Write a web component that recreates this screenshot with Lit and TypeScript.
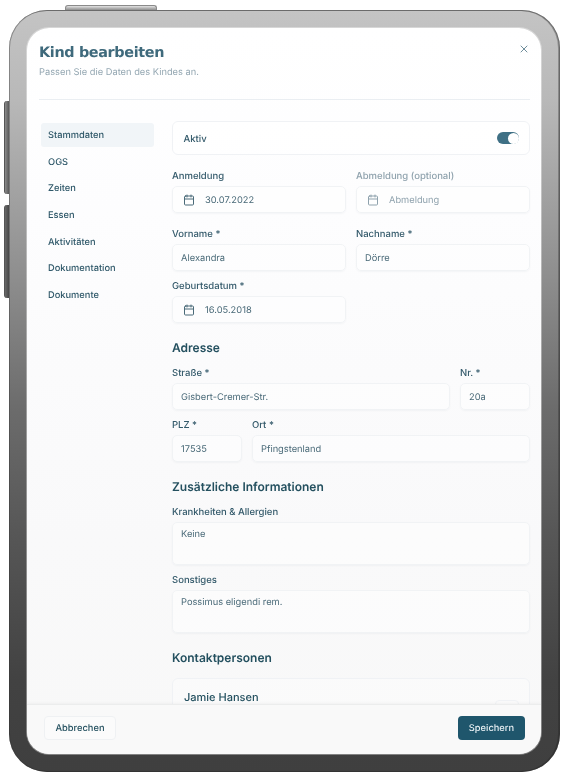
import { LitElement, html, css, svg } from "lit";
import { customElement } from "lit/decorators.js";

const calendar = svg`<svg class="cal" viewBox="0 0 24 24" fill="none" stroke="currentColor" stroke-width="2" stroke-linecap="round" stroke-linejoin="round"><path d="M8 2v4"/><path d="M16 2v4"/><rect x="3" y="4" width="18" height="18" rx="2"/><path d="M3 10h18"/></svg>`;

@customElement("app-root")
export class AppRoot extends LitElement {
  static styles = css`
    :host { display: block; width: 568px; height: 779px; position: relative; overflow: hidden; background: #fff; font-family: Inter, "Noto Sans", sans-serif; color: #24505f; text-rendering: geometricPrecision; }
    * { box-sizing: border-box; }
    .stage { padding: 10px 8px 7px 9px; height: 779px; position: relative; filter: blur(0.3px); }
    .btn-top { position: absolute; left: 65px; top: 5px; width: 92px; height: 5px; border-radius: 3px 3px 0 0; background: linear-gradient(#e2e2e2, #8d8d8d); border: 1px solid #8a8a8a; border-bottom: 0; }
    .btn-side { position: absolute; left: 4px; width: 5px; border-radius: 3px 0 0 3px; background: linear-gradient(90deg, #8c8c8c, #585858); border-left: 1px solid #555; }
    .b1 { top: 101px; height: 93px; }
    .b2 { top: 205px; height: 93px; background: linear-gradient(90deg, #6a6a6a, #464646); }
    .device { height: 762px; border-radius: 38px; padding: 18px 19px 18px 18px; background: linear-gradient(180deg, #c4c4c4 0%, #b8b8b8 12%, #8e8e8e 35%, #6c6c6c 52%, #555 70%, #424242 88%, #3f3f3f 100%); box-shadow: inset 0 0 0 1px rgba(50,50,50,.4), inset -1px 0 0 1px rgba(30,30,30,.3); display: flex; }
    .screen { flex: 1; border-radius: 22px; overflow: hidden; display: flex; flex-direction: column; background: linear-gradient(180deg, #ffffff 0%, #fdfdfe 25%, #f9f9fa 70%, #f8f8f8 100%); position: relative; box-shadow: 0 0 0 1px rgba(255,255,255,.35); }
    header { padding: 16px 11px 0 12px; height: 72px; position: relative; flex: none; }
    header::after { content: ""; position: absolute; left: 12px; right: 11px; bottom: 0; height: 1px; background: #eaeef2; }
    h1 { margin: 0; font: 700 14.4px/18px "DejaVu Sans", sans-serif; color: #3f6a7c; letter-spacing: -.35px; }
    .sub { margin: 5px 0 0; font-size: 9.3px; line-height: 12px; color: #94a7b2; }
    .close { position: absolute; right: 11px; top: 15px; width: 12px; height: 12px; color: #6f8d9b; }
    .body { flex: 1; min-height: 0; display: flex; gap: 18px; padding: 21px 11px 0 14px; overflow: hidden; }
    nav { width: 113px; flex: none; padding-top: 2px; display: flex; flex-direction: column; gap: 2.7px; }
    nav a { height: 24px; line-height: 25px; padding-left: 7px; font-size: 9.3px; font-weight: 500; color: #2f5869; border-radius: 3px; }
    nav a.on { background: #f1f5f8; }
    .main { flex: 1; min-width: 0; display: flex; flex-direction: column; }
    .active { height: 34px; flex: none; border: 1px solid #f0f2f5; border-radius: 6px; display: flex; align-items: center; justify-content: space-between; padding: 0 10px 0 10.5px; font-size: 9.5px; font-weight: 500; color: #33596a; background: rgba(255,255,255,.6); }
    .active .name { padding-top: 2px; }
    .toggle { width: 22px; height: 12px; border-radius: 6px; background: #3f7085; position: relative; }
    .toggle::after { content: ""; position: absolute; right: .5px; top: .5px; width: 11px; height: 11px; border-radius: 50%; background: #fff; }
    .row { display: grid; grid-template-columns: 174px 174px; column-gap: 10px; flex: none; }
    .f { display: flex; flex-direction: column; min-width: 0; }
    label { font-size: 9.5px; font-weight: 500; line-height: 14px; color: #33596a; margin-bottom: 4px; height: 12px; }
    .muted label { color: #8fa2ad; }
    .input { height: 27px; border: 1px solid #f1f3f5; border-radius: 5px; background: rgba(255,255,255,.45); box-shadow: 0 1px 2px rgba(30,50,70,.04); display: flex; align-items: center; padding: 2px 8px 0; font-size: 9.3px; color: #4a6a78; }
    .input.date { padding-left: 9.5px; gap: 10.5px; }
    .input.date .cal { margin-top: -2px; }
    .muted .input { color: #8fa2ad; }
    .cal { width: 12px; height: 12px; flex: none; }
    .input.area { height: 43px; align-items: flex-start; padding-top: 6px; }
    h2 { margin: 0; font-size: 12px; font-weight: 600; line-height: 16px; color: #24505f; flex: none; }
    .anm { margin-top: 15px; }
    .vor { margin-top: 15px; }
    .geb { margin-top: 9px; }
    .adr { margin-top: 17px; }
    .str { margin-top: 11px; }
    .zus { margin-top: 17px; }
    .kra { margin-top: 11px; }
    .son { margin-top: 9px; }
    .kon { margin-top: 17px; }
    .addr { display: grid; grid-template-columns: 278px 70px; column-gap: 10px; flex: none; }
    .city { display: grid; grid-template-columns: 70px 278px; column-gap: 10px; flex: none; margin-top: 9px; }
    .card { flex: none; height: 80px; margin-top: 12px; border: 1px solid #f0f2f5; border-radius: 6px; background: rgba(255,255,255,.3); padding: 11px; font-size: 11px; font-weight: 500; line-height: 14px; color: #24505f; position: relative; }
    .card i { position: absolute; right: 10px; top: 21px; width: 24px; height: 24px; border: 1px solid #f0f2f5; border-radius: 4px; }
    footer { position: absolute; left: 0; right: 0; bottom: 0; height: 50px; background: #f9f9f9; border-top: 1px solid #eceded; box-shadow: 0 -1px 3px rgba(0,0,0,.04); display: flex; align-items: center; justify-content: space-between; padding: 0 16px 4px 17px; }
    button { font: 500 9.3px Inter, sans-serif; height: 24px; border-radius: 4px; padding: 2px 0 0; text-rendering: geometricPrecision; }
    .cancel { width: 72px; background: #fbfbfb; border: 1px solid #eff1f3; color: #24505f; }
    .save { width: 67px; background: #1f566c; border: 0; color: #e6eef2; }
  `;

  private field(label: string, value: string, cls = "") {
    return html`<div class="f ${cls}"><label>${label}</label><div class="input">${value}</div></div>`;
  }
  private date(label: string, value: string, cls = "") {
    return html`<div class="f ${cls}"><label>${label}</label><div class="input date">${calendar}<span>${value}</span></div></div>`;
  }

  render() {
    const nav = ["Stammdaten", "OGS", "Zeiten", "Essen", "Aktivitäten", "Dokumentation", "Dokumente"];
    return html`<div class="stage">
      <div class="btn-top"></div><div class="btn-side b1"></div><div class="btn-side b2"></div>
      <div class="device"><div class="screen">
        <header>
          <h1>Kind bearbeiten</h1>
          <p class="sub">Passen Sie die Daten des Kindes an.</p>
          <svg class="close" viewBox="0 0 24 24" fill="none" stroke="currentColor" stroke-width="2" stroke-linecap="round"><path d="M18 6 6 18"/><path d="m6 6 12 12"/></svg>
        </header>
        <div class="body">
          <nav>${nav.map((n, i) => html`<a class=${i === 0 ? "on" : ""}>${n}</a>`)}</nav>
          <div class="main">
            <div class="active"><span class="name">Aktiv</span><span class="toggle"></span></div>
            <div class="row anm">${this.date("Anmeldung", "30.07.2022")}${this.date("Abmeldung (optional)", "Abmeldung", "muted")}</div>
            <div class="row vor">${this.field("Vorname *", "Alexandra")}${this.field("Nachname *", "Dörre")}</div>
            <div class="row geb">${this.date("Geburtsdatum *", "16.05.2018")}</div>
            <h2 class="adr">Adresse</h2>
            <div class="addr str">${this.field("Straße *", "Gisbert-Cremer-Str.")}${this.field("Nr. *", "20a")}</div>
            <div class="city">${this.field("PLZ *", "17535")}${this.field("Ort *", "Pfingstenland")}</div>
            <h2 class="zus">Zusätzliche Informationen</h2>
            <div class="f kra"><label>Krankheiten & Allergien</label><div class="input area">Keine</div></div>
            <div class="f son"><label>Sonstiges</label><div class="input area">Possimus eligendi rem.</div></div>
            <h2 class="kon">Kontaktpersonen</h2>
            <div class="card">Jamie Hansen<i></i></div>
          </div>
        </div>
        <footer><button class="cancel">Abbrechen</button><button class="save">Speichern</button></footer>
      </div></div>
    </div>`;
  }
}
